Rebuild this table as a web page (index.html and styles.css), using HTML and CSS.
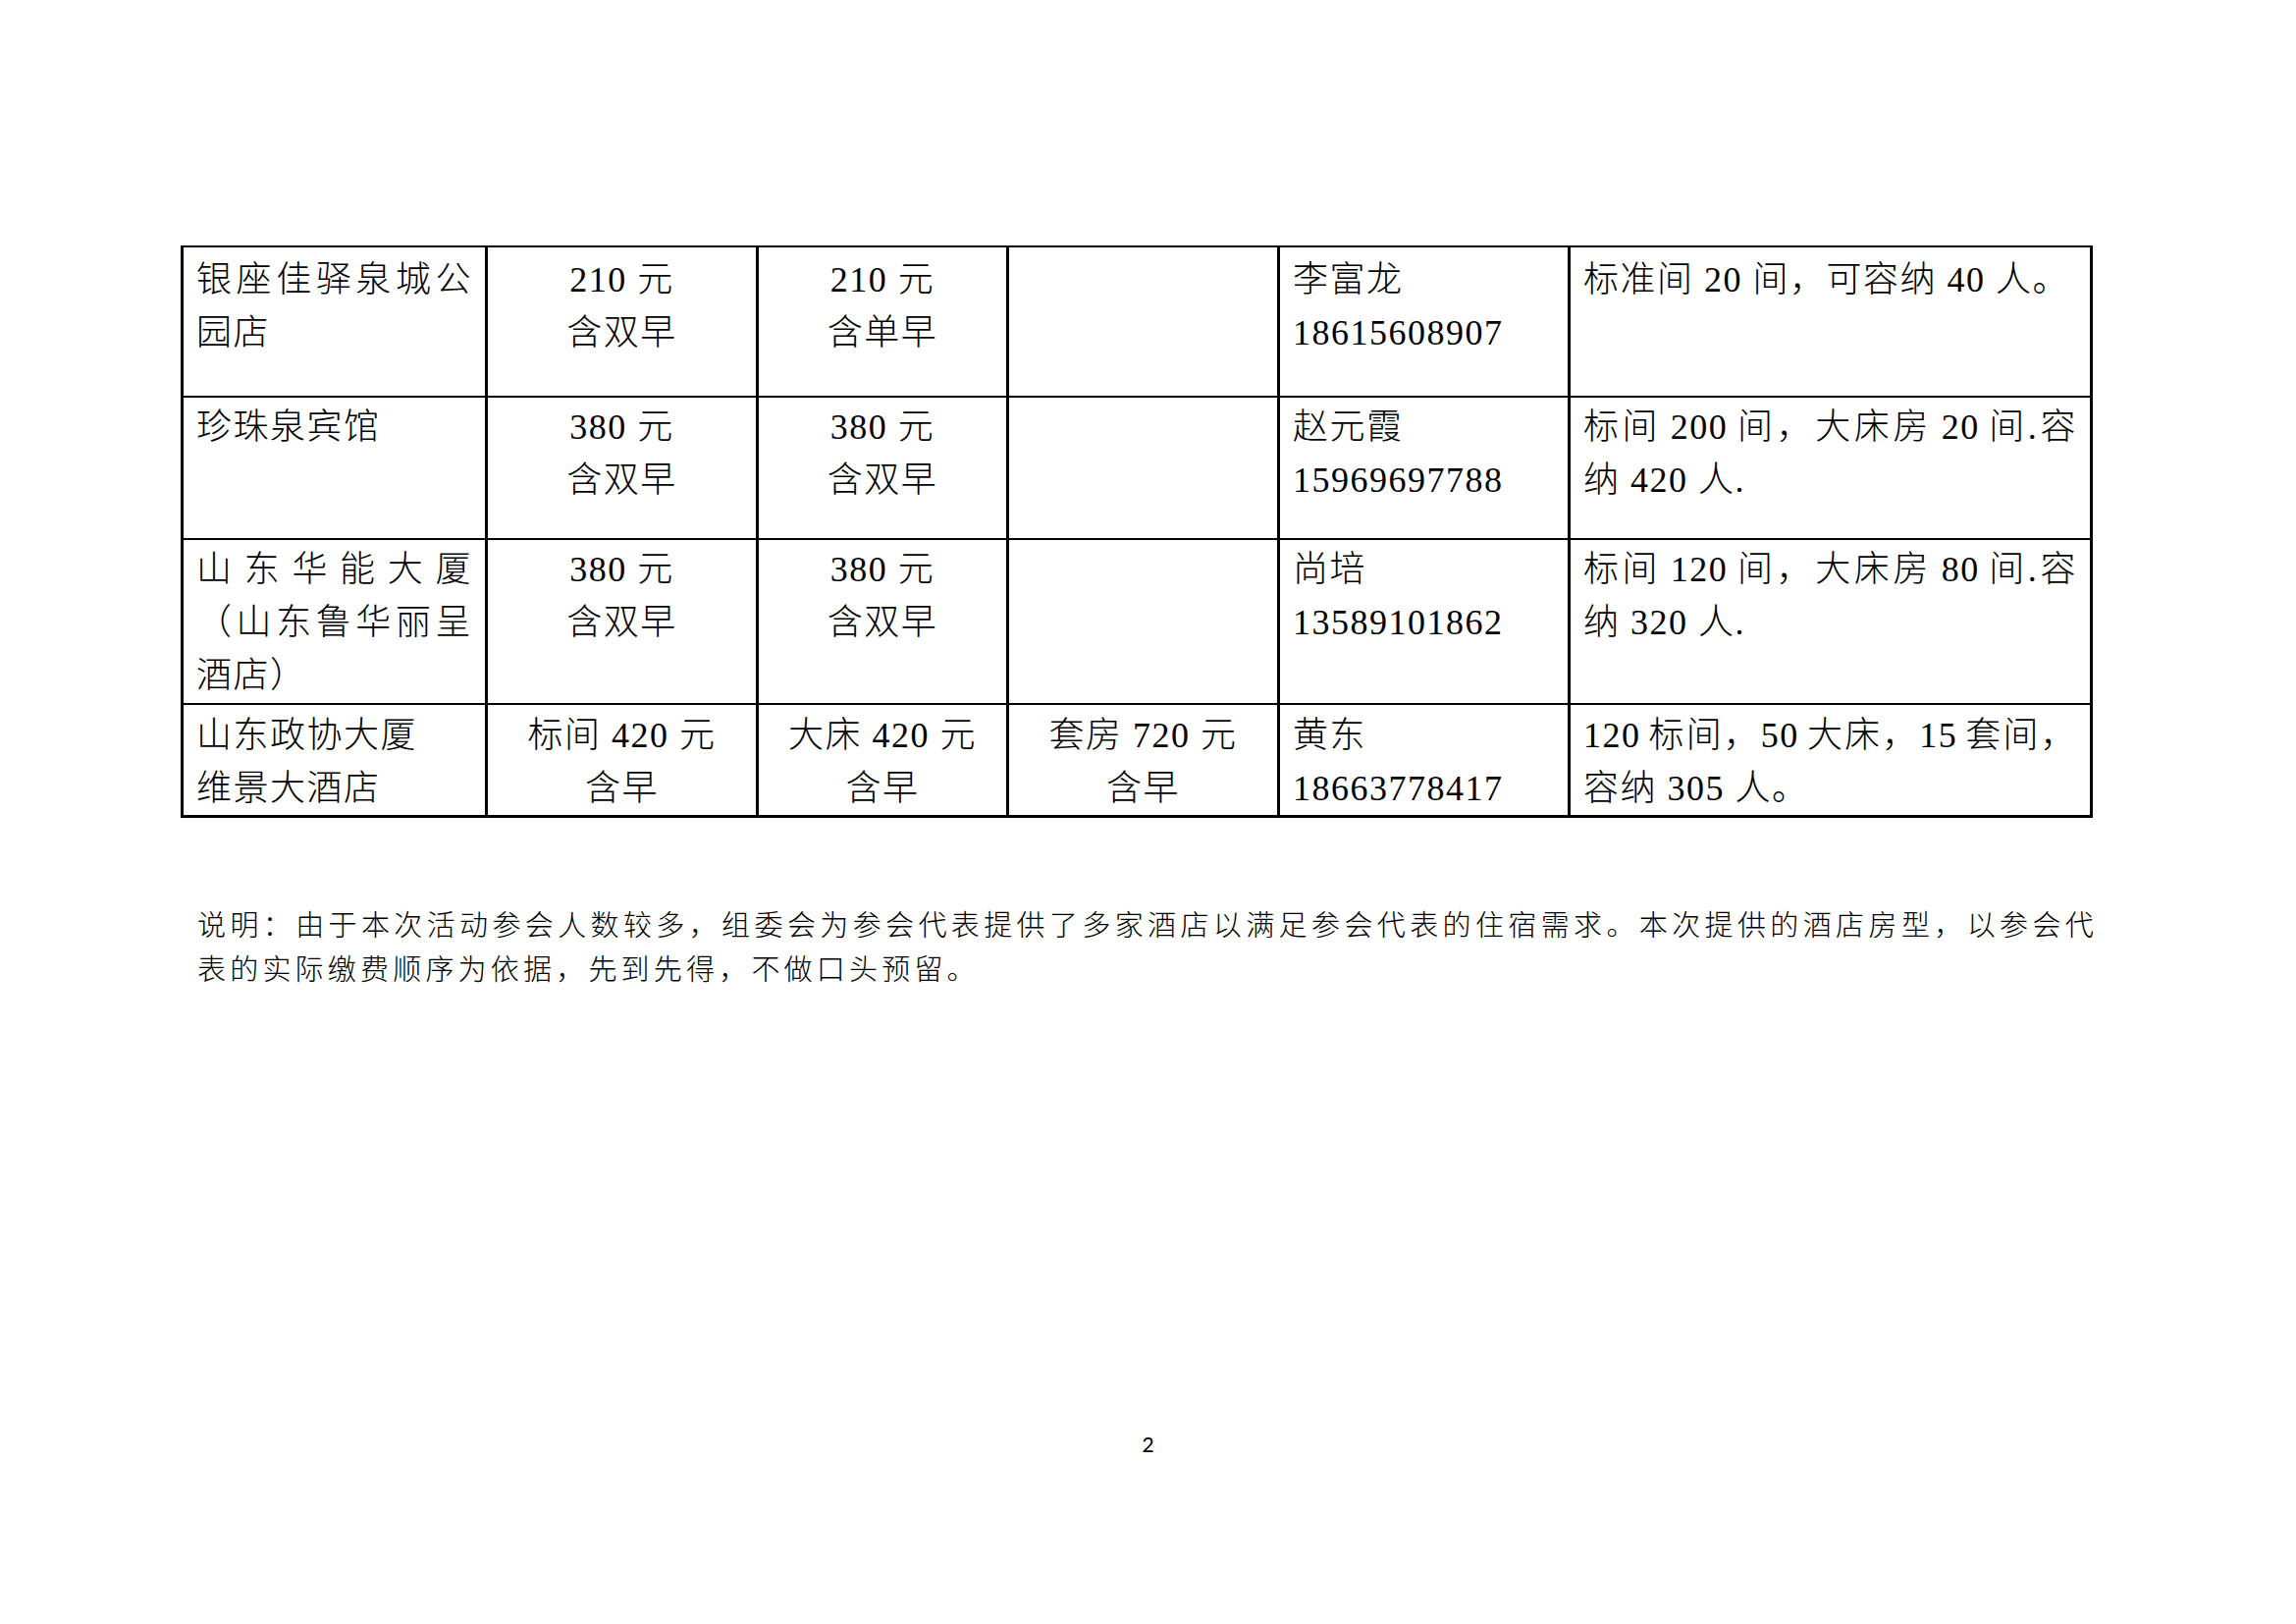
FILE: index.html
```html
<!DOCTYPE html>
<html lang="zh-CN">
<head>
<meta charset="utf-8">
<title>酒店信息</title>
<link rel="stylesheet" href="styles.css">
</head>
<body>
<div class="page">
  <table class="hotels">
    <colgroup>
      <col class="c-name">
      <col class="c-price">
      <col class="c-price2">
      <col class="c-price3">
      <col class="c-contact">
      <col class="c-desc">
    </colgroup>
    <tr class="r1">
      <td class="name">银座佳驿泉城公园店</td>
      <td class="center">210 元<br>含双早</td>
      <td class="center">210 元<br>含单早</td>
      <td class="center"></td>
      <td class="left">李富龙<br>18615608907</td>
      <td class="left"><span class="ln">标准间 20 间，可容纳 40 人。</span></td>
    </tr>
    <tr class="r2">
      <td class="name">珍珠泉宾馆</td>
      <td class="center">380 元<br>含双早</td>
      <td class="center">380 元<br>含双早</td>
      <td class="center"></td>
      <td class="left">赵元霞<br>15969697788</td>
      <td class="left"><span class="ln fill">标间 200 间，大床房 20 间.容</span><span class="ln">纳 420 人.</span></td>
    </tr>
    <tr class="r3">
      <td class="name">山东华能大厦（山东鲁华丽呈酒店）</td>
      <td class="center">380 元<br>含双早</td>
      <td class="center">380 元<br>含双早</td>
      <td class="center"></td>
      <td class="left">尚培<br>13589101862</td>
      <td class="left"><span class="ln fill">标间 120 间，大床房 80 间.容</span><span class="ln">纳 320 人.</span></td>
    </tr>
    <tr class="r4">
      <td class="name">山东政协大厦<br>维景大酒店</td>
      <td class="center">标间 420 元<br>含早</td>
      <td class="center">大床 420 元<br>含早</td>
      <td class="center">套房 720 元<br>含早</td>
      <td class="left">黄东<br>18663778417</td>
      <td class="left"><span class="ln fill">120 标间，50 大床，15 套间，</span><span class="ln">容纳 305 人。</span></td>
    </tr>
  </table>

  <div class="note">
    <span class="ln fill">说明：由于本次活动参会人数较多，组委会为参会代表提供了多家酒店以满足参会代表的住宿需求。本次提供的酒店房型，以参会代</span>
    <span class="ln">表的实际缴费顺序为依据，先到先得，不做口头预留。</span>
  </div>

  <div class="pageno">2</div>
</div>
</body>
</html>
```

FILE: styles.css
```css
* {
  box-sizing: border-box;
}

html,
body {
  margin: 0;
  padding: 0;
  background: #ffffff;
}

.page {
  width: 2339px;
  height: 1654px;
  display: flex;
  flex-direction: column;
  align-items: flex-start;
  padding-top: 250px;
  font-family: "Liberation Serif", "Noto Sans CJK SC", serif;
  font-weight: 300;
  color: #000000;
}

.hotels {
  border-collapse: separate;
  border-spacing: 0;
  table-layout: fixed;
  width: 1948px;
  margin-left: 184px;
  border-top: 2px solid #000;
  border-left: 3px solid #000;
  font-size: 36px;
  line-height: 54px;
  letter-spacing: 1.5px;
}

.c-name { width: 310px; }
.c-price { width: 276px; }
.c-price2 { width: 255px; }
.c-price3 { width: 276px; }
.c-contact { width: 296px; }
.c-desc { width: 532px; }

.hotels td {
  border-right: 3px solid #000;
  border-bottom: 2px solid #000;
  padding: 3px 13px 0 13px;
  vertical-align: top;
}

.r1 { height: 153px; }
.r2 { height: 145px; }
.r3 { height: 168px; }
.r4 { height: 113px; }

.r1 td {
  padding-top: 6px;
}

.r4 td {
  padding-top: 4px;
  border-bottom-width: 3px;
}

.name {
  text-align: justify;
}

.center {
  text-align: center;
}

.left {
  text-align: left;
}

.ln {
  display: block;
}

.fill {
  text-align: justify;
  text-align-last: justify;
  word-spacing: -3px;
}

.note {
  margin-top: 88px;
  margin-left: 201px;
  width: 1945px;
  font-size: 29px;
  line-height: 45px;
  letter-spacing: 4.2px;
}

.note .fill {
  width: 1936px;
  word-spacing: 0;
}

.pageno {
  align-self: stretch;
  margin-top: auto;
  padding-bottom: 171px;
  text-align: center;
  font-family: Lato, "Liberation Sans", sans-serif;
  font-weight: 400;
  font-size: 21px;
  line-height: 25px;
}
```
